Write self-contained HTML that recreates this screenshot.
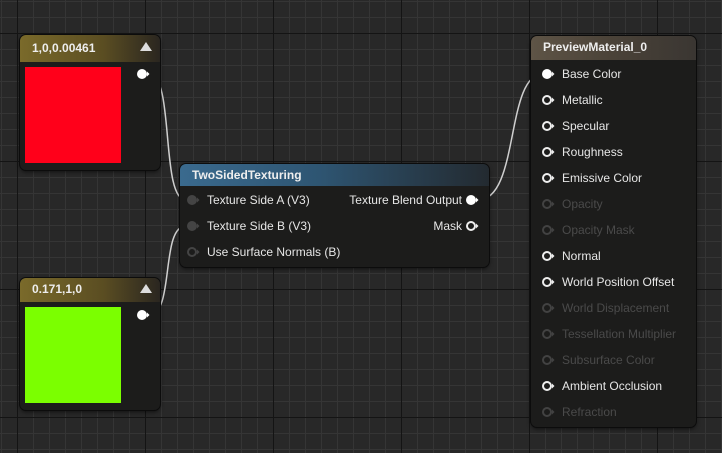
<!DOCTYPE html>
<html><head><style>
*{margin:0;padding:0;box-sizing:border-box}
body{width:722px;height:453px;overflow:hidden;position:relative;font-family:"Liberation Sans",sans-serif;font-size:12px;color:#e6e6e6;
background-color:#282828;
background-image:
linear-gradient(to right,#141414 1px,transparent 1px),
linear-gradient(to bottom,#141414 1px,transparent 1px),
linear-gradient(to right,#353535 1px,transparent 1px),
linear-gradient(to bottom,#353535 1px,transparent 1px);
background-size:128px 128px,128px 128px,16px 16px,16px 16px;
background-position:17px 0,0 33px,1px 0,0 1px;}
.node{position:absolute;background:#1c1c1b;border-radius:6px;box-shadow:0 0 0 1px #0c0c0c,0 2px 4px rgba(0,0,0,.6)}
.hdr{height:24px;border-radius:6px 6px 0 0;font-weight:bold;color:#eee;padding:4px 0 0 12px;font-size:12px}
.row{position:absolute;height:14px;line-height:14px;white-space:nowrap}
svg.pin{position:absolute}
</style></head><body>
<svg width="722" height="453" style="position:absolute;left:0;top:0">
<g fill="none" stroke="#cfcfcf" stroke-width="1.5">
<path d="M149 74 C175 74 160 200 186 200"/>
<path d="M149 315 C175 315 160 226 186 226"/>
<path d="M478 200 C520 200 505 74 543 74"/>
</g></svg>

<div class="node" style="left:20px;top:35px;width:140px;height:135px">
<div class="hdr" style="background:linear-gradient(to right,#7a6a2a,#5a4d22 60%,#2a2620);height:27px;padding-top:6px">1,0,0.00461</div>
<div style="position:absolute;left:5px;top:32px;width:96px;height:96px;background:#ff001a"></div>
<div style="position:absolute;right:8px;top:7px;width:0;height:0;border-left:6px solid transparent;border-right:6px solid transparent;border-bottom:9px solid #ddd"></div>
</div>
<div class="node" style="left:20px;top:278px;width:140px;height:132px">
<div class="hdr" style="background:linear-gradient(to right,#7a6a2a,#5a4d22 60%,#2a2620);height:24px;padding-top:4px">0.171,1,0</div>
<div style="position:absolute;left:5px;top:29px;width:96px;height:96px;background:#7bff00"></div>
<div style="position:absolute;right:8px;top:6px;width:0;height:0;border-left:6px solid transparent;border-right:6px solid transparent;border-bottom:9px solid #ddd"></div>
</div>
<svg class="pin" style="left:136px;top:68px" width="14" height="12"><circle cx="6" cy="6" r="5" fill="#fff"/><path d="M11 3.5 L13.5 6 L11 8.5Z" fill="#fff"/></svg>
<svg class="pin" style="left:136px;top:309px" width="14" height="12"><circle cx="6" cy="6" r="5" fill="#fff"/><path d="M11 3.5 L13.5 6 L11 8.5Z" fill="#fff"/></svg>

<div class="node" style="left:180px;top:164px;width:309px;height:103px">
<div class="hdr" style="background:linear-gradient(to right,#3a6a8e,#2e5572 45%,#232a30);height:22px;padding-top:4px">TwoSidedTexturing</div>
<div class="row" style="left:27px;top:29px">Texture Side A (V3)</div>
<div class="row" style="left:27px;top:55px">Texture Side B (V3)</div>
<div class="row" style="left:27px;top:81px">Use Surface Normals (B)</div>
<div class="row" style="right:27px;top:29px">Texture Blend Output</div>
<div class="row" style="right:27px;top:55px">Mask</div>
</div>
<svg class="pin" style="left:186px;top:194px" width="14" height="12"><circle cx="6" cy="6" r="5" fill="#444"/><path d="M11 3.5 L13.5 6 L11 8.5Z" fill="#444"/></svg>
<svg class="pin" style="left:186px;top:220px" width="14" height="12"><circle cx="6" cy="6" r="5" fill="#444"/><path d="M11 3.5 L13.5 6 L11 8.5Z" fill="#444"/></svg>
<svg class="pin" style="left:186px;top:246px" width="14" height="12"><circle cx="6" cy="6" r="4" fill="none" stroke="#444" stroke-width="2"/><path d="M11 3.5 L13.5 6 L11 8.5Z" fill="#444"/></svg>
<svg class="pin" style="left:465px;top:194px" width="14" height="12"><circle cx="6" cy="6" r="5" fill="#fff"/><path d="M11 3.5 L13.5 6 L11 8.5Z" fill="#fff"/></svg>
<svg class="pin" style="left:465px;top:220px" width="14" height="12"><circle cx="6" cy="6" r="4" fill="none" stroke="#eee" stroke-width="2"/><path d="M11 3.5 L13.5 6 L11 8.5Z" fill="#eee"/></svg>

<div class="node" style="left:531px;top:36px;width:165px;height:391px">
<div class="hdr" style="background:linear-gradient(to right,#5e5446,#4a4238 50%,#3a3632);height:24px;padding-top:4px">PreviewMaterial_0</div>
</div>
<div id="pm"></div>
<script>
var rows=[["Base Color",1,1],["Metallic",1,0],["Specular",1,0],["Roughness",1,0],["Emissive Color",1,0],["Opacity",0,0],["Opacity Mask",0,0],["Normal",1,0],["World Position Offset",1,0],["World Displacement",0,0],["Tessellation Multiplier",0,0],["Subsurface Color",0,0],["Ambient Occlusion",1,0],["Refraction",0,0]];
var h="";
rows.forEach(function(r,i){var y=74+26*i;var c=r[1]?"#eee":"#424242";
h+='<div class="row" style="left:562px;top:'+(y-7)+'px;color:'+(r[1]?"#e6e6e6":"#4a4a4a")+'">'+r[0]+'</div>';
h+='<svg class="pin" style="left:541px;top:'+(y-6)+'px" width="14" height="12">'+(r[2]?'<circle cx="6" cy="6" r="5" fill="#fff"/>':'<circle cx="6" cy="6" r="4" fill="none" stroke="'+c+'" stroke-width="2"/>')+'<path d="M11 3.5 L13.5 6 L11 8.5Z" fill="'+c+'"/></svg>';});
document.getElementById("pm").innerHTML=h;
</script>
</body></html>
